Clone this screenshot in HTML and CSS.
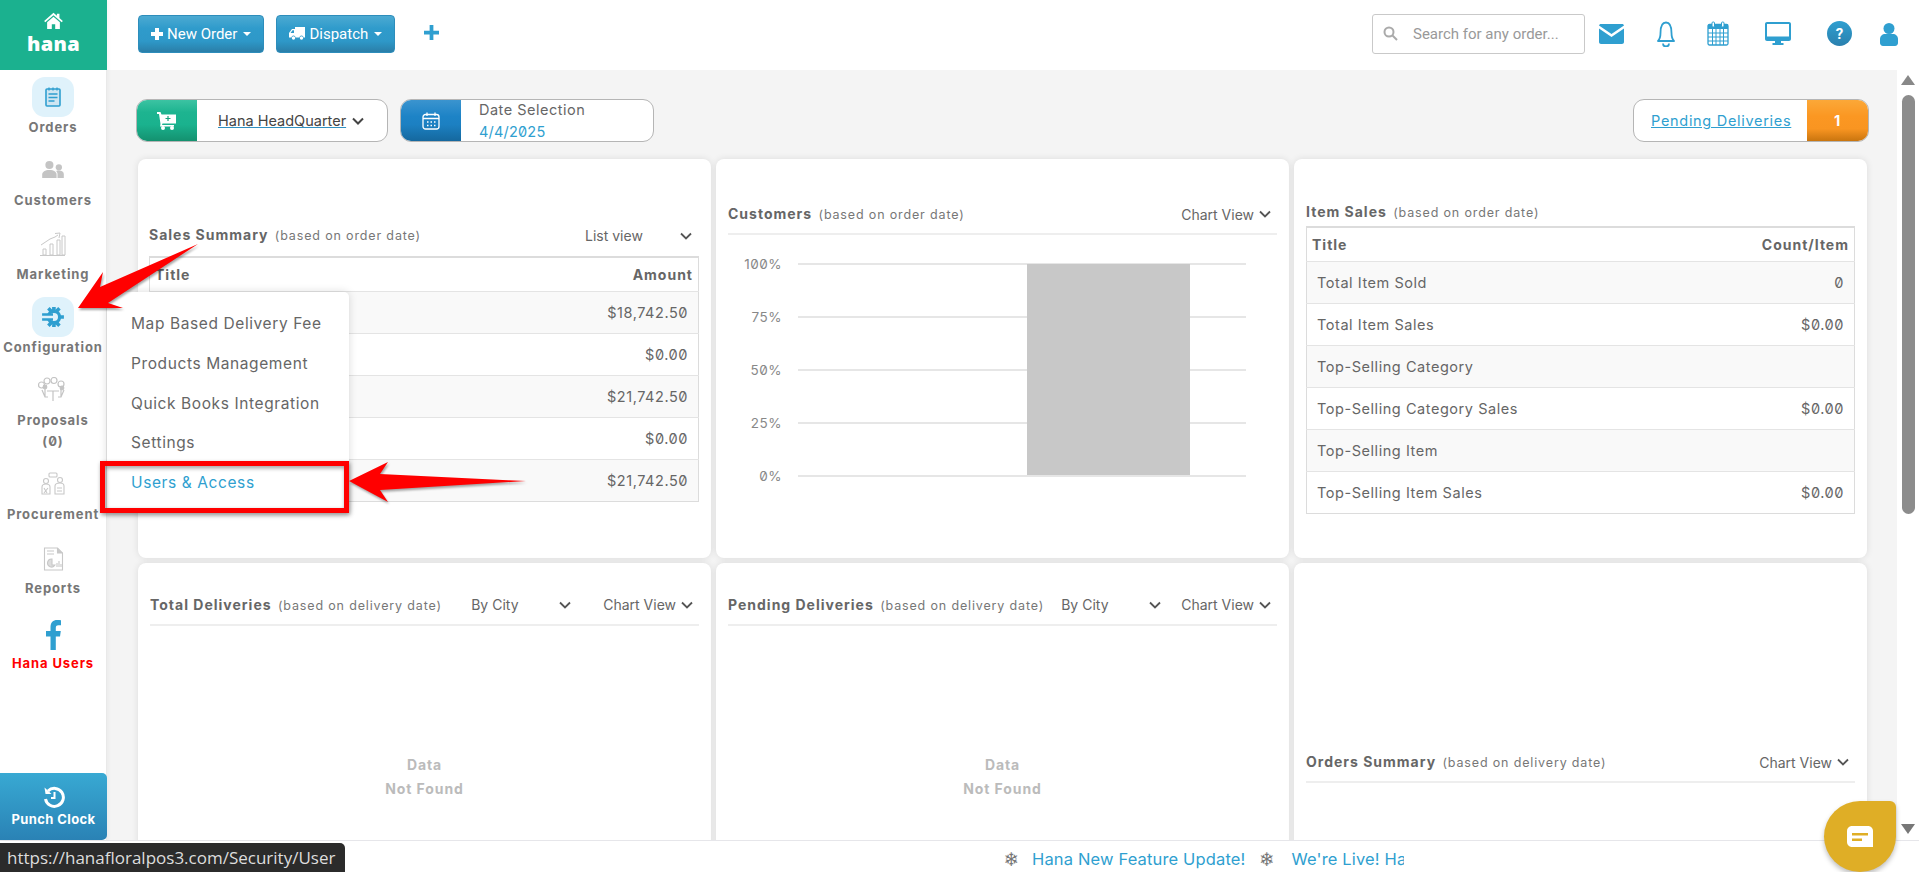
FILE: index.html
```html
<!DOCTYPE html>
<html lang="en">
<head>
<meta charset="utf-8">
<title>Hana</title>
<link rel="stylesheet" href="styles.css">
</head>
<body>
<div class="app">
  <div class="upper">
    <aside class="sidebar">
      <a class="brand">
        <svg class="brand-icon" viewBox="0 0 24 20"><path fill="#fff" d="M12 1 1 10.500l1.300 1.500L12 3.700 21.700 12l1.300-1.500-4-3.400V2h-3v2.500zM4.500 12v8h5.500v-5.500h4V20h5.500v-8L12 5.600z"/></svg>
        <span class="brand-name">hana</span>
      </a>
      <nav class="nav">
        <a class="nav-item">
          <span class="nav-icon active"><svg width="16" height="20" viewBox="0 0 16 20"><rect x="1" y="2" width="14" height="17" rx="1" fill="#cfe6f2" stroke="#2f9fd0" stroke-width="1.600"/><path d="M4 .5v3M8 .5v3M12 .5v3" stroke="#2f9fd0" stroke-width="1.300"/><path d="M3.500 7h9M3.500 10.500h9M3.500 14h6" stroke="#2f9fd0" stroke-width="1.300"/></svg></span>
          <span class="nav-label">Orders</span>
        </a>
        <a class="nav-item">
          <span class="nav-icon"><svg width="22" height="18" viewBox="0 0 24 20"><g fill="#c4c4c4"><circle cx="8" cy="4.500" r="4.500"/><path d="M0 19v-4c0-3 3-5 8-5s8 2 8 5v4z"/><circle cx="18.500" cy="7" r="3.500"/><path d="M17 19v-4.500c0-1.500-.5-2.500-1.500-3.500 1-.4 2-.5 3-.5 3.500 0 5.500 1.500 5.500 4v4.500z"/></g></svg></span>
          <span class="nav-label">Customers</span>
        </a>
        <a class="nav-item">
          <span class="nav-icon mk"><svg width="26" height="24" viewBox="0 0 26 24" fill="none" stroke="#c8c8c8" stroke-width="1"><path d="M0 23.500h25M3 23v-6h3v6zM10 23V12h3v11zM17 23V8h3v15zM22 23V4h3v19zM1 13 10 7l5-2 3-2"/><path d="M15 1.500 20 1l-1 5"/></svg></span>
          <span class="nav-label">Marketing</span>
        </a>
        <a class="nav-item">
          <span class="nav-icon active"><svg width="22" height="20" viewBox="0 0 24 22"><g fill="#2f9fd0"><circle cx="13" cy="11" r="8"/><path d="M11 0h4v5h-4zM11 17h4v5h-4zM19 9h5v4h-5zM5.500 2.800l2.800-2.800 3.500 3.500-2.800 2.800zM20.500 2.800 17.700 0l-3.500 3.500 2.800 2.800zM5.500 19.200 8.300 22l3.500-3.500-2.800-2.800zM20.500 19.200 17.700 22l-3.500-3.500 2.800-2.800z"/></g><circle cx="13" cy="11" r="4.500" fill="#dff2fb"/><path fill="#dff2fb" d="M2 8h11v6H2z"/><path fill="#2f9fd0" d="M0 7h12v2.500H0zM0 12.500h12V15H0z"/></svg></span>
          <span class="nav-label">Configuration</span>
        </a>
        <a class="nav-item">
          <span class="nav-icon"><svg width="30" height="26" viewBox="0 0 30 26" fill="none" stroke="#c4c4c4" stroke-width="1.200"><circle cx="3.500" cy="8" r="3"/><circle cx="9" cy="4" r="3"/><circle cx="16" cy="3.500" r="3"/><circle cx="23" cy="7" r="3"/><path d="M9 14h12M15 14v10M7 12v8M23 12v8M4 13l3 7h3M26 13l-3 7h-3"/><circle cx="7" cy="10" r="1.800" fill="#c4c4c4"/><circle cx="24" cy="11" r="1.800" fill="#c4c4c4"/></svg></span>
          <span class="nav-label">Proposals<br>(0)</span>
        </a>
        <a class="nav-item">
          <span class="nav-icon"><svg width="24" height="24" viewBox="0 0 24 24" fill="none" stroke="#c8c8c8" stroke-width="1.100"><rect x="8" y="1" width="8" height="4" rx="1"/><circle cx="5" cy="9" r="2.500"/><circle cx="19" cy="8" r="2.500"/><path d="M1 22v-7c0-2 2-3 4-3s4 1 4 3v7zM14 22v-8c0-2 2-3 5-3s4 1 4 3v8z"/><path d="M3 16l3 5M7 16l-4 5M16 16h5M16 19h5"/></svg></span>
          <span class="nav-label">Procurement</span>
        </a>
        <a class="nav-item">
          <span class="nav-icon rp"><svg width="21" height="24" viewBox="0 0 21 24" fill="none" stroke="#c8c8c8" stroke-width="1.100"><path d="M1.500 1h13l5 5v17h-18z"/><path d="M14.500 1v5h5" fill="#c8c8c8"/><path d="M9 12a4 4 0 1 0 3 6h-3z" fill="#ddd"/><path d="M14 20v-4M16 20v-6M18 20v-3M4 4h7M4 7h7"/></svg></span>
          <span class="nav-label">Reports</span>
        </a>
        <a class="nav-item fb">
          <span class="fb-icon"><svg width="15" height="30" viewBox="0 0 15 30"><path fill="#2f9fd0" d="M4.500 30V16.500H0V11h4.500V7C4.500 2.500 7.200 0 11 0c1.500 0 3 .1 4 .3v5h-2.500C10.200 5.300 9.800 6.500 9.800 8v3h5l-.8 5.500H9.800V30z"/></svg></span>
          <span class="nav-label red">Hana Users</span>
        </a>
      </nav>
      <a class="punch">
        <svg width="22" height="22" viewBox="0 0 22 22" fill="none" stroke="#fff" stroke-width="3"><path d="M5 5a9 9 0 1 1-2.500 8"/><path d="M1.500 1.500 2.500 8h6z" fill="#fff" stroke="none"/><path d="M11.500 6v6H8" stroke-width="2"/></svg>
        <span>Punch Clock</span>
      </a>
    </aside>
    <div class="main">
      <header class="topbar">
        <button class="btn"><svg width="12" height="12" viewBox="0 0 12 12"><path fill="#fff" d="M4 0h4v4h4v4H8v4H4V8H0V4h4z"/></svg>New Order<i class="caret"></i></button>
        <button class="btn"><svg width="16" height="13" viewBox="0 0 16 13"><path fill="#fff" d="M6 0h10v10.500h-1.500a2 2 0 0 0-4 0H6.500a2 2 0 0 0-4 0H0V6l3-4h3zM1.500 6H5V3.200H3.500z"/><circle fill="#fff" cx="4.500" cy="11" r="1.700"/><circle fill="#fff" cx="12.500" cy="11" r="1.700"/></svg>Dispatch<i class="caret"></i></button>
        <svg class="top-plus" width="15" height="15" viewBox="0 0 12 12"><path fill="#2f9fd0" d="M4.500 0h3v4.500H12v3H7.500V12h-3V7.500H0v-3h4.500z"/></svg>
        <div class="top-right">
          <div class="search">
            <svg width="15" height="15" viewBox="0 0 15 15" fill="none" stroke="#aaa" stroke-width="2"><circle cx="6" cy="6" r="4.500"/><path d="m9.500 9.500 4.500 4.500"/></svg>
            <span>Search for any order...</span>
          </div>
          <svg class="ti ti-mail" width="25" height="20" viewBox="0 0 25 20"><path fill="#2f9fd0" d="M2 0h21c1 0 2 .7 2 1.500L12.500 10 0 1.500C0 .7 1 0 2 0zM0 4.500 12.500 13 25 4.500V18c0 1.100-.9 2-2 2H2c-1.100 0-2-.9-2-2z"/></svg>
          <svg class="ti ti-bell" width="20" height="26" viewBox="0 0 20 26" fill="none" stroke="#2f9fd0" stroke-width="1.800"><path d="M2 20c2-2 2.500-4 2.500-8C4.500 5 6.500 1.500 10 1.500S15.500 5 15.500 12c0 4 .5 6 2.500 8z" stroke-linejoin="round"/><path d="M7 22.500a3 3 0 0 0 6 0"/></svg>
          <svg class="ti ti-cal" width="22" height="25" viewBox="0 0 22 25"><rect x="1" y="3.500" width="20" height="20.500" rx="1.500" fill="#fff" stroke="#2f9fd0" stroke-width="1.300"/><path fill="#2f9fd0" d="M1 3.500h20V8H1z"/><path d="M1 12h20M1 16h20M1 20h20M5.500 8v16M9 8v16M13 8v16M16.500 8v16" stroke="#2f9fd0" stroke-width="1"/><rect x="5" y="1" width="2.500" height="5" rx="1" fill="#fff" stroke="#2f9fd0"/><rect x="14.500" y="1" width="2.500" height="5" rx="1" fill="#fff" stroke="#2f9fd0"/></svg>
          <svg class="ti ti-mon" width="26" height="24" viewBox="0 0 26 24"><path fill="#2f9fd0" fill-rule="evenodd" d="M2 0h22c1.100 0 2 .9 2 2v15c0 1.100-.9 2-2 2h-8v2h2.500v2h-11v-2H10v-2H2c-1.100 0-2-.9-2-2V2C0 .9.900 0 2 0zm0 2v12.500h22V2z"/></svg>
          <svg class="ti ti-help" width="25" height="25" viewBox="0 0 25 25"><defs><linearGradient id="hg" x1="0" y1="0" x2="0" y2="1"><stop offset="0" stop-color="#2f9fd0"/><stop offset="1" stop-color="#2a80ae"/></linearGradient></defs><circle cx="12.500" cy="12.500" r="12.500" fill="url(#hg)"/><text x="12.500" y="18" text-anchor="middle" class="help-q">?</text></svg>
          <svg class="ti ti-user" width="18" height="24" viewBox="0 0 18 24"><circle cx="9" cy="6.500" r="5.500" fill="#2f9fd0"/><path fill="#2f9fd0" d="M0 21v-4c0-3 2.500-5 5-5h8c2.500 0 5 2 5 5v4c0 1.500-1.200 3-3 3H3c-1.800 0-3-1.500-3-3z"/></svg>
        </div>
      </header>
      <div class="body">
        <main class="content">
          <div class="filters">
            <div class="pill pill-loc">
              <span class="pill-icon green"><svg width="19" height="18" viewBox="0 0 19 18"><path fill="#fff" d="M0 0h3.500l1 2.500H19v9H5.500L5 13h12v1.500H3L3.500 12 2 2H0z"/><circle cx="6" cy="16" r="2" fill="#fff"/><circle cx="15" cy="16" r="2" fill="#fff"/><path stroke="#1aa37f" stroke-width="1.200" d="M8.500 6.500h5M11 4v5"/></svg></span>
              <span class="pill-text"><u>Hana HeadQuarter</u><svg class="chev" width="12" height="8" viewBox="0 0 12 8" fill="none" stroke="#444" stroke-width="2"><path d="m1 1.500 5 5 5-5"/></svg></span>
            </div>
            <div class="pill pill-date">
              <span class="pill-icon blue"><svg width="18" height="18" viewBox="0 0 18 18" fill="none" stroke="#fff" stroke-width="1.300"><rect x="1" y="2.500" width="16" height="14.500" rx="2.500"/><path d="M1 6.500h16M5 .5v3.500M13 .5v3.500"/><path d="M5 10h1.500M8.500 10H10M12 10h1.500M5 13.500h1.500M8.500 13.500H10M12 13.500h1.500"/></svg></span>
              <span class="date-text"><span>Date Selection</span><b>4/4/2025</b></span>
            </div>
            <div class="pill pill-pending">
              <u>Pending Deliveries</u>
              <span class="count">1</span>
            </div>
          </div>
          <div class="cards">
            <section class="card c-sales">
              <div class="card-head plain"><h3>Sales Summary <small>(based on order date)</small></h3><span class="view w-list">List view<svg class="chev" width="12" height="8" viewBox="0 0 12 8" fill="none" stroke="#555" stroke-width="1.800"><path d="m1 1.500 5 5 5-5"/></svg></span></div>
              <table class="tbl">
                <tr><th>Title</th><th>Amount</th></tr>
                <tr><td></td><td>$18,742.50</td></tr>
                <tr><td></td><td>$0.00</td></tr>
                <tr><td></td><td>$21,742.50</td></tr>
                <tr><td></td><td>$0.00</td></tr>
                <tr><td></td><td>$21,742.50</td></tr>
              </table>
            </section>
            <section class="card c-cust">
              <div class="card-head"><h3>Customers <small>(based on order date)</small></h3><span class="view">Chart View<svg class="chev" width="12" height="8" viewBox="0 0 12 8" fill="none" stroke="#555" stroke-width="1.800"><path d="m1 1.500 5 5 5-5"/></svg></span></div>
              <div class="chart">
                <div class="chart-row"><span>100%</span><i></i></div>
                <div class="chart-row"><span>75%</span><i></i></div>
                <div class="chart-row"><span>50%</span><i></i></div>
                <div class="chart-row"><span>25%</span><i></i></div>
                <div class="chart-row"><span>0%</span><i></i></div>
                <div class="chart-bar"></div>
              </div>
            </section>
            <section class="card c-item">
              <div class="card-head plain"><h3>Item Sales <small>(based on order date)</small></h3></div>
              <table class="tbl">
                <tr><th>Title</th><th>Count/Item</th></tr>
                <tr><td>Total Item Sold</td><td>0</td></tr>
                <tr><td>Total Item Sales</td><td>$0.00</td></tr>
                <tr><td>Top-Selling Category</td><td></td></tr>
                <tr><td>Top-Selling Category Sales</td><td>$0.00</td></tr>
                <tr><td>Top-Selling Item</td><td></td></tr>
                <tr><td>Top-Selling Item Sales</td><td>$0.00</td></tr>
              </table>
            </section>
            <section class="card c-low">
              <div class="card-head"><h3>Total Deliveries <small>(based on delivery date)</small></h3><span class="view w-city w-city-far">By City<svg class="chev" width="12" height="8" viewBox="0 0 12 8" fill="none" stroke="#555" stroke-width="1.800"><path d="m1 1.500 5 5 5-5"/></svg></span><span class="view">Chart View<svg class="chev" width="12" height="8" viewBox="0 0 12 8" fill="none" stroke="#555" stroke-width="1.800"><path d="m1 1.500 5 5 5-5"/></svg></span></div>
              <div class="empty">Data<br>Not Found</div>
            </section>
            <section class="card c-low">
              <div class="card-head"><h3>Pending Deliveries <small>(based on delivery date)</small></h3><span class="view w-city">By City<svg class="chev" width="12" height="8" viewBox="0 0 12 8" fill="none" stroke="#555" stroke-width="1.800"><path d="m1 1.500 5 5 5-5"/></svg></span><span class="view">Chart View<svg class="chev" width="12" height="8" viewBox="0 0 12 8" fill="none" stroke="#555" stroke-width="1.800"><path d="m1 1.500 5 5 5-5"/></svg></span></div>
              <div class="empty">Data<br>Not Found</div>
            </section>
            <section class="card c-orders">
              <div class="card-head"><h3>Orders Summary <small>(based on delivery date)</small></h3><span class="view">Chart View<svg class="chev" width="12" height="8" viewBox="0 0 12 8" fill="none" stroke="#555" stroke-width="1.800"><path d="m1 1.500 5 5 5-5"/></svg></span></div>
            </section>
          </div>
        </main>
        <div class="scrollbar">
          <i class="sb-up"></i>
          <i class="sb-thumb"></i>
          <i class="sb-down"></i>
        </div>
      </div>
    </div>
  </div>
  <footer class="ticker">
    <div class="ticker-track">
      <span class="flake">❄</span><a>Hana New Feature Update!</a><span class="flake">❄</span><a>We're Live! Ha</a>
    </div>
  </footer>
</div>

<div class="flyout">
  <a>Map Based Delivery Fee</a>
  <a>Products Management</a>
  <a>Quick Books Integration</a>
  <a>Settings</a>
  <a class="cur">Users &amp; Access</a>
</div>
<div class="redbox"></div>
<svg class="arrows" width="1919" height="872" viewBox="0 0 1919 872">
  <polygon points="78,308 103,272 100,287 198,244 108,303 123,308" fill="#f00"/>
  <polygon points="349,481 388,462 380,474 526,481 380,490 388,502" fill="#f00"/>
</svg>
<div class="status">https://hanafloralpos3.com/Security/User</div>
<div class="chat">
  <svg width="26" height="21" viewBox="0 0 26 21"><path fill="#fff" d="M5 0h16c2.800 0 5 2.200 5 5v16H5c-2.800 0-5-2.200-5-5V5c0-2.800 2.200-5 5-5z"/><path fill="#dfae26" d="M5 7h16v2.500H5zM5 12.500h10V15H5z"/></svg>
</div>
</body>
</html>
```
FILE: styles.css
```css
* { box-sizing: border-box; }
html, body { margin: 0; height: 100%; overflow: hidden; }
body { font-family: Inter, "Liberation Sans", sans-serif; color: #666; background: #fff; font-feature-settings: "zero" 1; }
a { text-decoration: none; color: inherit; }
.app { height: 872px; display: flex; flex-direction: column; }
.upper { flex: 1; display: flex; min-height: 0; }

.sidebar { width: 107px; flex: none; background: #fff; border-right: 1px solid #e9e9e9; display: flex; flex-direction: column; box-shadow: 2px 0 3px rgba(0,0,0,.03); position: relative; z-index: 2; }
.brand { height: 70px; margin-right: -1px; background: #1bb18f; display: flex; flex-direction: column; align-items: center; padding-top: 12px; color: #fff; }
.brand-icon { width: 21px; height: 17px; }
.brand-name { font-weight: 800; font-size: 20px; line-height: 27px; letter-spacing: .3px; margin-top: 1px; font-family: "Open Sans", sans-serif; }
.nav { padding-top: 7px; display: flex; flex-direction: column; }
.nav-item { display: flex; flex-direction: column; align-items: center; padding-bottom: 12.300px; }
.nav-icon { width: 42px; height: 40px; display: flex; align-items: center; justify-content: center; border-radius: 13px; }
.nav-icon.active { background: #dff2fb; }
.nav-icon.mk { padding-top: 1px; }
.nav-icon.rp { padding-top: 3px; }
.nav-label { font-size: 13px; font-weight: 700; line-height: 21px; color: #777; text-align: center; letter-spacing: .9px; white-space: nowrap; }
.nav-label.red { color: #f00; }
.nav-item.fb { padding-top: 9px; }
.fb-icon { height: 30px; display: block; margin-bottom: 3px; }
.punch { margin-top: auto; height: 67px; margin-right: -1px; background: linear-gradient(#38a9d3, #2a82b5); border-radius: 0 5px 5px 0; color: #fff; display: flex; flex-direction: column; align-items: center; padding-top: 13px; font-weight: 700; font-size: 13px; letter-spacing: .4px; gap: 3px; position: relative; white-space: nowrap; }

.main { flex: 1; min-width: 0; display: flex; flex-direction: column; }
.topbar { height: 70px; flex: none; background: #fff; display: flex; align-items: center; padding: 0 0 3px 31px; }
.btn { height: 38px; border: 1px solid #2d8dbb; border-radius: 4px; background: linear-gradient(#4caad2, #2f9bcb 35%, #2e98c8 70%, #2a7ea8); color: #fff; font: 15px Roboto, sans-serif; display: flex; align-items: center; gap: 4px; padding: 0 12px; margin-right: 12px; white-space: nowrap; }
.caret { width: 0; height: 0; border: 4px solid transparent; border-top-color: #fff; border-bottom: 0; margin-left: 2px; }
.top-plus { margin-left: 17px; margin-top: -3px; }
.top-right { margin-left: auto; display: flex; align-items: center; height: 100%; position: relative; padding-top: 0; }
.search { width: 213px; height: 40px; border: 1px solid #c9c9c9; border-radius: 3px; display: flex; align-items: center; padding-left: 10px; gap: 15px; font: 15px Roboto, sans-serif; color: #999; white-space: nowrap; }
.ti { flex: none; }
.ti-mail { margin-left: 14px; }
.ti-bell { margin-left: 32px; }
.ti-cal { margin-left: 31px; }
.ti-mon { margin-left: 36px; }
.ti-help { margin-left: 36px; }
.ti-user { margin: 0 21px 0 28px; }
.help-q { fill: #fff; font: 700 15px Roboto, sans-serif; }

.body { flex: 1; display: flex; min-height: 0; background: #f4f4f4; }
.content { flex: 1; min-width: 0; padding: 29px 30px 0 31px; overflow: hidden; }
.filters { display: flex; height: 43px; padding-right: 0; margin: 0 0 17px -2px; gap: 12px; }
.pill { height: 43px; background: #fff; border: 1px solid #b5b5b5; border-radius: 11px; display: flex; overflow: hidden; font-size: 14.500px; }
.pill-loc { width: 252px; }
.pill-date { width: 254px; }
.pill-pending { width: 236px; margin-left: auto; align-items: center; color: #2f9fd0; padding-left: 17px; margin-right: -2px; letter-spacing: .7px; white-space: nowrap; }
.pill-icon { width: 61px; flex: none; display: flex; align-items: center; justify-content: center; margin-left: -1px; }
.green { background: linear-gradient(#3cc3a2, #1db490 30%, #1ab28e 60%, #14916f); }
.blue { background: linear-gradient(#3b94cf, #1d83c6 40%, #1c80c2 60%, #15689e); }
.pill-text { flex: 1; display: flex; align-items: center; padding-left: 21px; color: #444; gap: 6px; white-space: nowrap; }
.pill-text u { text-decoration-color: #2f8fc0; }
.date-text { display: flex; flex-direction: column; padding-left: 18px; line-height: 22px; letter-spacing: .5px; margin-top: -1px; white-space: nowrap; }
.date-text b { font-weight: 400; color: #2f9fd0; letter-spacing: .2px; }
.count { margin-left: auto; width: 61px; height: 100%; flex: none; background: linear-gradient(#fba838, #fb9722 40%, #f99521 70%, #c9750f); color: #fff; font-weight: 700; display: flex; align-items: center; justify-content: center; }

.cards { display: grid; grid-template-columns: repeat(3, 1fr); grid-template-rows: 399px 400px; gap: 5px; }
.card { background: #fff; border-radius: 8px; padding: 0 12px; box-shadow: 0 0 7px rgba(0,0,0,.1); min-width: 0; }
.c-sales { padding: 67px 12px 0 11px; }
.c-cust { padding-top: 36px; }
.c-item { padding-top: 44px; }
.c-low { padding-top: 22px; }
.c-orders { padding-top: 180px; }
.card-head { display: flex; align-items: center; height: 40px; border-bottom: 2px solid #eee; gap: 0; white-space: nowrap; }
.c-low .card-head { height: 41px; }
.card-head.plain { border-bottom: 0; height: 30px; align-items: flex-start; line-height: 20px; }
.c-item .card-head.plain { height: 23px; }
.card-head h3 { margin: -1px auto 0 0; font-size: 14px; font-weight: 700; color: #666; letter-spacing: 1px; }
.card-head small { font-size: 12.500px; font-weight: 400; letter-spacing: .85px; color: #777; margin-left: 2px; }
.view { font-size: 14px; color: #666; display: flex; align-items: center; gap: 5px; margin-right: 6px; }
.view.w-list { width: 107px; justify-content: space-between; margin-right: 7px; }
.view.w-city { width: 100px; justify-content: space-between; margin-right: 20px; margin-left: -20px; }
.view.w-city-far { margin-right: 32px; }

.tbl { width: 100%; border-collapse: collapse; font-size: 14.500px; border: 1px solid #dcdcdc; border-top: 2px solid #dcdcdc; letter-spacing: .55px; }
.tbl tr { height: 42px; }
.tbl tr:nth-child(even) { background: #f9f9f9; }
.tbl tr:first-child { height: 34px; background: #fff; }
.tbl th { font-size: 14px; font-weight: 700; color: #666; text-align: left; padding: 0 5px; letter-spacing: 1px; }
.tbl th:last-child { text-align: right; }
.tbl td { border-top: 1px solid #e4e4e4; padding: 0 10px; color: #666; }
.tbl td:last-child { text-align: right; }

.chart { position: relative; margin-top: 0; padding-top: 29px; }
.chart-row { display: flex; align-items: center; height: 52.800px; font-size: 13.500px; color: #888; letter-spacing: .5px; position: relative; top: -26px; }
.chart-row span { width: 54px; text-align: right; }
.chart-row i { margin-left: 16px; width: 448px; height: 2px; background: #e6e6e6; }
.chart-bar { position: absolute; left: 299px; top: 29px; width: 163px; height: 211px; background: #c8c8c8; }
.empty { margin-top: 127px; text-align: center; font-size: 14px; font-weight: 700; color: #bbb; line-height: 24px; letter-spacing: .9px; }

.scrollbar { width: 22px; flex: none; background: #fff; display: flex; flex-direction: column; align-items: center; padding-top: 5px; position: relative; }
.sb-up { width: 0; height: 0; border: 7px solid transparent; border-bottom: 10px solid #888; border-top: 0; }
.sb-thumb { width: 13px; height: 419px; background: #8c8c8c; border-radius: 7px; margin-top: 10px; }
.sb-down { width: 0; height: 0; border: 7px solid transparent; border-top: 10px solid #777; border-bottom: 0; margin-top: auto; margin-bottom: 6px; }

.ticker { height: 32px; flex: none; background: #fff; border-top: 1px solid #e6e6ea; display: flex; }
.ticker-track { margin-left: 1000px; width: 404px; overflow: hidden; white-space: nowrap; display: flex; align-items: center; font-size: 16.500px; letter-spacing: .15px; color: #2f9fd0; padding-top: 5px; }
.flake { color: #777; flex: none; margin-right: 9px; width: 23px; text-align: center; font-family: "DejaVu Sans", sans-serif; font-size: 19px; }
.ticker-track a { margin-right: 10px; flex: none; }
.ticker-track a:last-child { margin-left: 4px; margin-right: 0; }

.flyout { position: absolute; z-index: 3; left: 107px; top: 292px; width: 242px; height: 221px; background: #fff; border-radius: 0 5px 5px 0; box-shadow: 0 0 8px rgba(0,0,0,.15); padding: 12px 24px; display: flex; flex-direction: column; font-size: 15.500px; color: #666; }
.flyout a { height: 39.700px; flex: none; display: flex; align-items: center; white-space: nowrap; letter-spacing: .6px; }
.flyout .cur { color: #2f9fd0; }
.redbox { position: absolute; z-index: 4; left: 100px; top: 461px; width: 249px; height: 52px; border: 5px solid #f00; filter: drop-shadow(1px 2px 2px rgba(0,0,0,.4)); }
.arrows { position: absolute; z-index: 5; left: 0; top: 0; pointer-events: none; filter: drop-shadow(1px 2px 1px rgba(0,0,0,.35)); }
.status { position: absolute; z-index: 6; left: 0; top: 843px; width: 345px; height: 29px; background: #2b2b2b; color: #ddd; border-radius: 0 5px 0 0; font: 17px/29px "Open Sans", sans-serif; padding-left: 7px; white-space: nowrap; overflow: hidden; }
.chat { position: absolute; z-index: 6; left: 1824px; top: 801px; width: 72px; height: 71px; background: #dfae26; border-radius: 50% 6px 50% 50%; box-shadow: 0 3px 5px rgba(0,0,0,.25); display: flex; align-items: center; justify-content: center; }
```
